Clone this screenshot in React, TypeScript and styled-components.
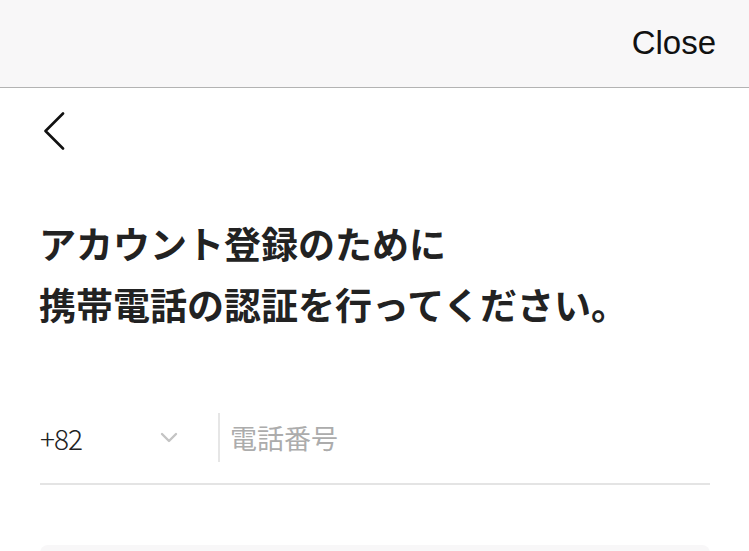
import React from 'react';
import styled, {createGlobalStyle} from 'styled-components';

const GlobalStyle = createGlobalStyle`
  html, body {
    margin: 0;
    padding: 0;
    background: #ffffff;
  }
  body {
    font-family: 'Noto Sans CJK JP', 'Noto Sans', sans-serif;
    overflow: hidden;
  }
`;

export default function App() {
  return (
    <Page>
      <GlobalStyle />
      <TopBar>
        <CloseButton>Close</CloseButton>
      </TopBar>

      <Content>
        <BackButton aria-label='back'>
          <svg width='24' height='38' viewBox='0 0 24 38' fill='none'>
            <path
              d='M21 1.5 L3.5 19 L21 36.5'
              stroke='#111'
              strokeWidth='2.6'
              strokeLinecap='round'
              strokeLinejoin='round'
            />
          </svg>
        </BackButton>

        <Title>
          アカウント登録のために
          <br />
          携帯電話の認証を行ってください。
        </Title>

        <PhoneRow>
          <CountrySelect>
            <CountryCode>+82</CountryCode>
            <svg width='18' height='11' viewBox='0 0 18 11' fill='none'>
              <path
                d='M2 2 L9 9 L16 2'
                stroke='#c4c4c4'
                strokeWidth='2.4'
                strokeLinecap='round'
                strokeLinejoin='round'
              />
            </svg>
          </CountrySelect>
          <Divider />
          <PhoneInput placeholder='電話番号' />
        </PhoneRow>

        <NextButton />
      </Content>
    </Page>
  );
}

const Page = styled.div`
  width: 749px;
  height: 551px;
  display: flex;
  flex-direction: column;
  overflow: hidden;
`;

const TopBar = styled.div`
  height: 87px;
  flex-shrink: 0;
  display: flex;
  align-items: center;
  justify-content: flex-end;
  padding: 0 33px 0 0;
  background: #f8f7f8;
  border-bottom: 1px solid #b3b3b3;
`;

const CloseButton = styled.span`
  font-family: 'Liberation Sans', Arial, sans-serif;
  font-size: 33px;
  color: #111111;
  margin-top: -2px;
`;

const Content = styled.div`
  display: flex;
  flex-direction: column;
  padding: 0 39px 0 40px;
`;

const BackButton = styled.div`
  width: 24px;
  height: 38px;
  margin: 24px 0 0 2px;
`;

const Title = styled.h1`
  margin: 63px 0 0 -1px;
  font-family: 'Noto Sans CJK JP', sans-serif;
  font-weight: 700;
  font-size: 37px;
  line-height: 61px;
  color: #222222;
`;

const PhoneRow = styled.div`
  margin-top: 78px;
  height: 72px;
  display: flex;
  align-items: center;
  border-bottom: 2px solid #e4e4e4;
  padding-bottom: 21px;
  box-sizing: border-box;
`;

const CountrySelect = styled.div`
  width: 138px;
  display: flex;
  align-items: center;
  justify-content: space-between;
  box-sizing: border-box;
`;

const CountryCode = styled.span`
  font-family: 'Noto Sans CJK JP', sans-serif;
  font-weight: 300;
  font-size: 28px;
  letter-spacing: -1px;
  color: #222222;
`;

const Divider = styled.div`
  width: 2px;
  height: 49px;
  background: #e6e6e6;
  margin: 0 10px 0 40px;
`;

const PhoneInput = styled.input`
  flex: 1;
  border: none;
  outline: none;
  background: transparent;
  font-family: 'Noto Sans CJK JP', sans-serif;
  font-size: 27px;
  color: #222;
  padding: 0;

  &::placeholder {
    color: #acacac;
  }
`;

const NextButton = styled.div`
  margin-top: 60px;
  height: 70px;
  border-radius: 8px;
  background: #f8f7f8;
`;
